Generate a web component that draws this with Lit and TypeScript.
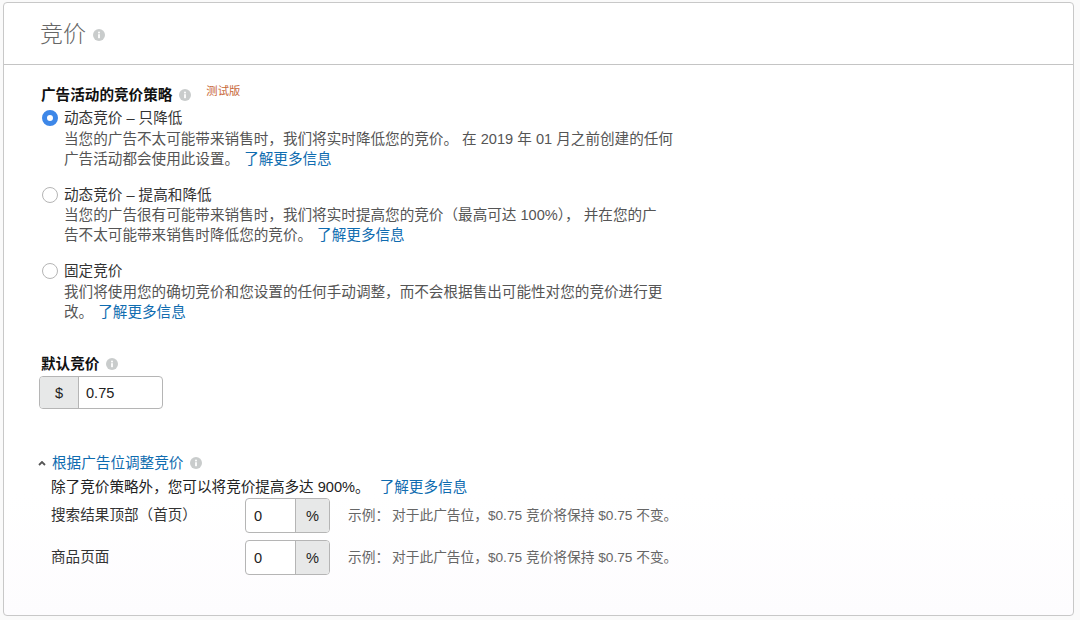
import { LitElement, html, css } from "lit";
import { customElement } from "lit/decorators.js";

const info = () => html`<svg class="info" viewBox="0 0 12 12" aria-hidden="true"><circle cx="6" cy="6" r="6" fill="#c9cccc"/><rect x="5.1" y="5.2" width="1.8" height="4" fill="#fff"/><rect x="5.1" y="2.7" width="1.8" height="1.7" fill="#fff"/></svg>`;

@customElement("app-root")
export class AppRoot extends LitElement {
  static styles = css`
    :host { display: block; width: 1080px; height: 620px; box-sizing: border-box; padding: 2px 6px 4px 3px; background: #fafafa; font-family: "Liberation Sans", "Noto Sans CJK SC", sans-serif; font-size: 14.6px; line-height: 20px; color: #555; overflow: hidden; }
    .card { height: 614px; box-sizing: border-box; border: 1px solid #c8c8c8; border-radius: 4px; background: linear-gradient(#fff 80%, #fdfcfe); }
    .head { height: 62px; box-sizing: border-box; border-bottom: 1px solid #c4c4c4; padding: 0 0 0 36px; display: flex; align-items: center; gap: 7px; font-size: 23px; line-height: 30px; color: #666; font-weight: 300; }
    .head .info { width: 12px; height: 12px; margin-top: 3px; }
    .body { padding: 20px 0 0 37px; }
    .info { width: 12px; height: 12px; flex: none; }
    .title { display: flex; align-items: center; gap: 7px; color: #111; font-weight: 700; height: 20px; }
    .beta { font-size: 11.3px; font-weight: 400; color: #c8683a; line-height: 14px; margin: -9px 0 0 8px; }
    .opt { display: grid; grid-template-columns: 18px 620px; column-gap: 4px; margin-left: 1px; }
    .opt + .opt { margin-top: 16px; }
    .first { margin-top: 3px; }
    .radio { width: 16px; height: 16px; box-sizing: border-box; border: 1px solid #b5b5b5; border-radius: 50%; background: #fff; align-self: center; }
    .radio.on { border: 5px solid #3d87e8; }
    .name { color: #333; }
    .desc { grid-column: 2; margin-top: 0.5px; }
    .line { white-space: nowrap; }
    a { color: #0f6cb0; text-decoration: none; margin-left: 5px; }
    .lbl { display: flex; align-items: center; gap: 7px; color: #111; font-weight: 700; margin-top: 32.5px; }
    .bid { display: flex; width: 124px; height: 33px; box-sizing: border-box; border: 1px solid #b5b5b5; border-radius: 4px; background: #fff; margin: 2px 0 0 -2px; color: #222; overflow: hidden; }
    .pre { width: 38px; background: #e7e8e8; border-right: 1px solid #b5b5b5; display: flex; align-items: center; justify-content: center; }
    .val { display: flex; align-items: center; padding-left: 7px; }
    .toggle { display: flex; align-items: center; margin: 44px 0 0 -3px; gap: 7px; }
    .chev { width: 8px; height: 5px; margin-right: -1px; }
    .blue { color: #0f6cb0; }
    .inner { padding-left: 10px; }
    .text { color: #222; margin-top: 4px; white-space: nowrap; }
    .text a { margin-left: 10px; }
    .row { display: grid; grid-template-columns: 176px 85px auto; align-items: center; column-gap: 18px; height: 35px; margin-top: 7px; }
    .text + .row { margin-top: 1px; }
    .row > span:first-child { margin-top: -1px; color: #333; }
    .pct { display: flex; height: 35px; box-sizing: border-box; border: 1px solid #b5b5b5; border-radius: 4px; background: #fff; color: #222; overflow: hidden; }
    .pct .n { width: 49px; padding-left: 8px; display: flex; align-items: center; box-sizing: border-box; }
    .pct .u { flex: 1; background: #e7e8e8; border-left: 1px solid #b5b5b5; display: flex; align-items: center; justify-content: center; }
    .eg { font-size: 13.7px; color: #666; display: flex; gap: 3px; }
  `;

  private row(label: string) {
    return html`<div class="row"><span>${label}</span><div class="pct"><span class="n">0</span><span class="u">%</span></div><span class="eg"><span>示例：</span><span>对于此广告位，$0.75 竞价将保持 $0.75 不变。</span></span></div>`;
  }

  render() {
    return html`<div class="card">
      <div class="head"><span>竞价</span>${info()}</div>
      <div class="body">
        <div class="title">广告活动的竞价策略 ${info()}<span class="beta">测试版</span></div>
        <div class="opt first"><span class="radio on"></span><span class="name">动态竞价 – 只降低</span>
          <div class="desc"><div class="line">当您的广告不太可能带来销售时，我们将实时降低您的竞价。 在 2019 年 01 月之前创建的任何</div><div class="line"><span>广告活动都会使用此设置。</span><a>了解更多信息</a></div></div></div>
        <div class="opt"><span class="radio"></span><span class="name">动态竞价 – 提高和降低</span>
          <div class="desc"><div class="line">当您的广告很有可能带来销售时，我们将实时提高您的竞价（最高可达 100%）， 并在您的广</div><div class="line"><span>告不太可能带来销售时降低您的竞价。</span><a>了解更多信息</a></div></div></div>
        <div class="opt"><span class="radio"></span><span class="name">固定竞价</span>
          <div class="desc"><div class="line">我们将使用您的确切竞价和您设置的任何手动调整，而不会根据售出可能性对您的竞价进行更</div><div class="line"><span>改。</span><a>了解更多信息</a></div></div></div>
        <div class="lbl">默认竞价 ${info()}</div>
        <div class="bid"><span class="pre">$</span><span class="val">0.75</span></div>
        <div class="toggle"><svg class="chev" viewBox="0 0 8 5"><path d="M1 4l3-3 3 3" fill="none" stroke="#555" stroke-width="1.8"/></svg><span class="blue">根据广告位调整竞价</span>${info()}</div>
        <div class="inner">
          <div class="text"><span>除了竞价策略外，您可以将竞价提高多达 900%。</span><a>了解更多信息</a></div>
          ${this.row("搜索结果顶部（首页）")}
          ${this.row("商品页面")}
        </div>
      </div>
    </div>`;
  }
}
